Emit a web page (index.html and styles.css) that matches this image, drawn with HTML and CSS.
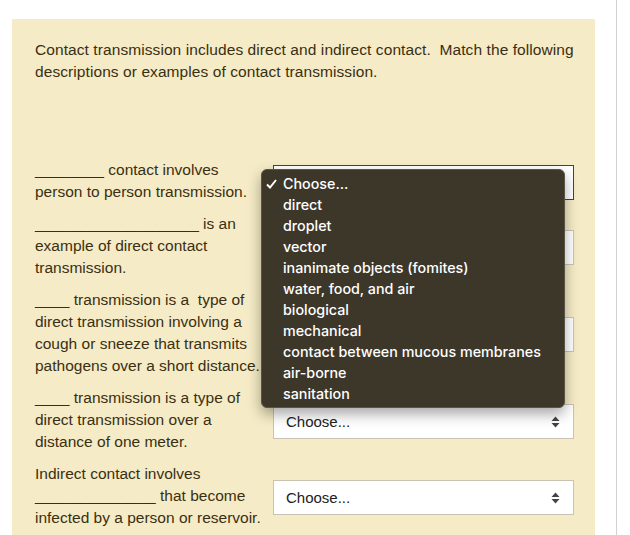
FILE: index.html
```html
<!DOCTYPE html>
<html>
<head>
<meta charset="utf-8">
<link rel="stylesheet" href="styles.css">
</head>
<body>
<div class="page">
  <div class="panel">
    <p class="intro">Contact transmission includes direct and indirect contact.&nbsp; Match the following descriptions or examples of contact transmission.</p>
    <div class="grid">
      <div class="cell">________ contact involves person to person transmission.</div>
      <div class="sel-wrap">
        <div class="select focus"><span>Choose...</span><svg class="arr" width="9" height="12" viewBox="0 0 9 12"><path d="M4.5 0.5 L8.5 5 H0.5 Z M4.5 11.5 L8.5 7 H0.5 Z" fill="#444"/></svg></div>
        <div class="menu">
          <div class="item sel"><svg class="chk" width="11" height="10" viewBox="0 0 11 10"><path d="M1 5.5 L4 8.5 L10 1" fill="none" stroke="#fff" stroke-width="2"/></svg>Choose...</div>
          <div class="item">direct</div>
          <div class="item">droplet</div>
          <div class="item">vector</div>
          <div class="item">inanimate objects (fomites)</div>
          <div class="item">water, food, and air</div>
          <div class="item">biological</div>
          <div class="item">mechanical</div>
          <div class="item">contact between mucous membranes</div>
          <div class="item">air-borne</div>
          <div class="item">sanitation</div>
        </div>
      </div>

      <div class="cell">___________________ is an example of direct contact transmission.</div>
      <div class="select"><span>Choose...</span><svg class="arr" width="9" height="12" viewBox="0 0 9 12"><path d="M4.5 0.5 L8.5 5 H0.5 Z M4.5 11.5 L8.5 7 H0.5 Z" fill="#444"/></svg></div>

      <div class="cell">____ transmission is a&nbsp; type of direct transmission involving a cough or sneeze that transmits pathogens over a short distance.</div>
      <div class="select"><span>Choose...</span><svg class="arr" width="9" height="12" viewBox="0 0 9 12"><path d="M4.5 0.5 L8.5 5 H0.5 Z M4.5 11.5 L8.5 7 H0.5 Z" fill="#444"/></svg></div>

      <div class="cell">____ transmission is a type of direct transmission over a distance of one meter.</div>
      <div class="select"><span>Choose...</span><svg class="arr" width="9" height="12" viewBox="0 0 9 12"><path d="M4.5 0.5 L8.5 5 H0.5 Z M4.5 11.5 L8.5 7 H0.5 Z" fill="#444"/></svg></div>

      <div class="cell">Indirect contact involves ______________ that become infected by a person or reservoir.</div>
      <div class="select"><span>Choose...</span><svg class="arr" width="9" height="12" viewBox="0 0 9 12"><path d="M4.5 0.5 L8.5 5 H0.5 Z M4.5 11.5 L8.5 7 H0.5 Z" fill="#444"/></svg></div>
    </div>
  </div>
  <div class="rule"></div>
</div>
</body>
</html>
```
FILE: styles.css
```css
html, body {
  margin: 0;
  padding: 0;
  background: #fff;
  height: 535px;
  overflow: hidden;
}
.page {
  display: flex;
  height: 535px;
}
.panel {
  margin-left: 12px;
  margin-top: 19px;
  width: 583px;
  box-sizing: border-box;
  padding: 20px 18px 0 23px;
  background: #f5ebc6;
  color: #3a2f12;
  font-family: "Liberation Sans", Arial, sans-serif;
  font-size: 15.5px;
  line-height: 22px;
}
.intro {
  margin: 0 0 76px 0;
  letter-spacing: 0.08px;
}
.grid {
  display: grid;
  grid-template-columns: 228px 301px;
  column-gap: 10px;
  row-gap: 10px;
  align-items: center;
}
.sel-wrap {
  position: relative;
}
.select {
  height: 35px;
  box-sizing: border-box;
  background: #fff;
  border: 1px solid #c9c3b3;
  display: flex;
  align-items: center;
  justify-content: space-between;
  padding: 0 13px 0 12px;
  color: #222;
  font-size: 15px;
  margin-top: 3px;
}
.select.focus {
  border-color: #3b2bd3;
}
.arr {
  display: block;
}
.menu {
  position: absolute;
  left: -12px;
  top: 7px;
  width: 304px;
  height: 239px;
  box-sizing: border-box;
  background: #3d372a;
  border-radius: 6px;
  border: 1px solid #5a5446;
  box-shadow: 0 6px 14px rgba(0,0,0,0.35);
  padding-top: 3px;
  font-family: Inter, "Open Sans", sans-serif;
  font-weight: 500;
  font-size: 14.3px;
  line-height: 21px;
  color: #fff;
}
.item {
  padding-left: 21px;
  position: relative;
}
.chk {
  position: absolute;
  left: 4px;
  top: 6px;
}
.rule {
  margin-left: 21px;
  width: 1px;
  background: #d2d2d2;
  height: 535px;
}
```
